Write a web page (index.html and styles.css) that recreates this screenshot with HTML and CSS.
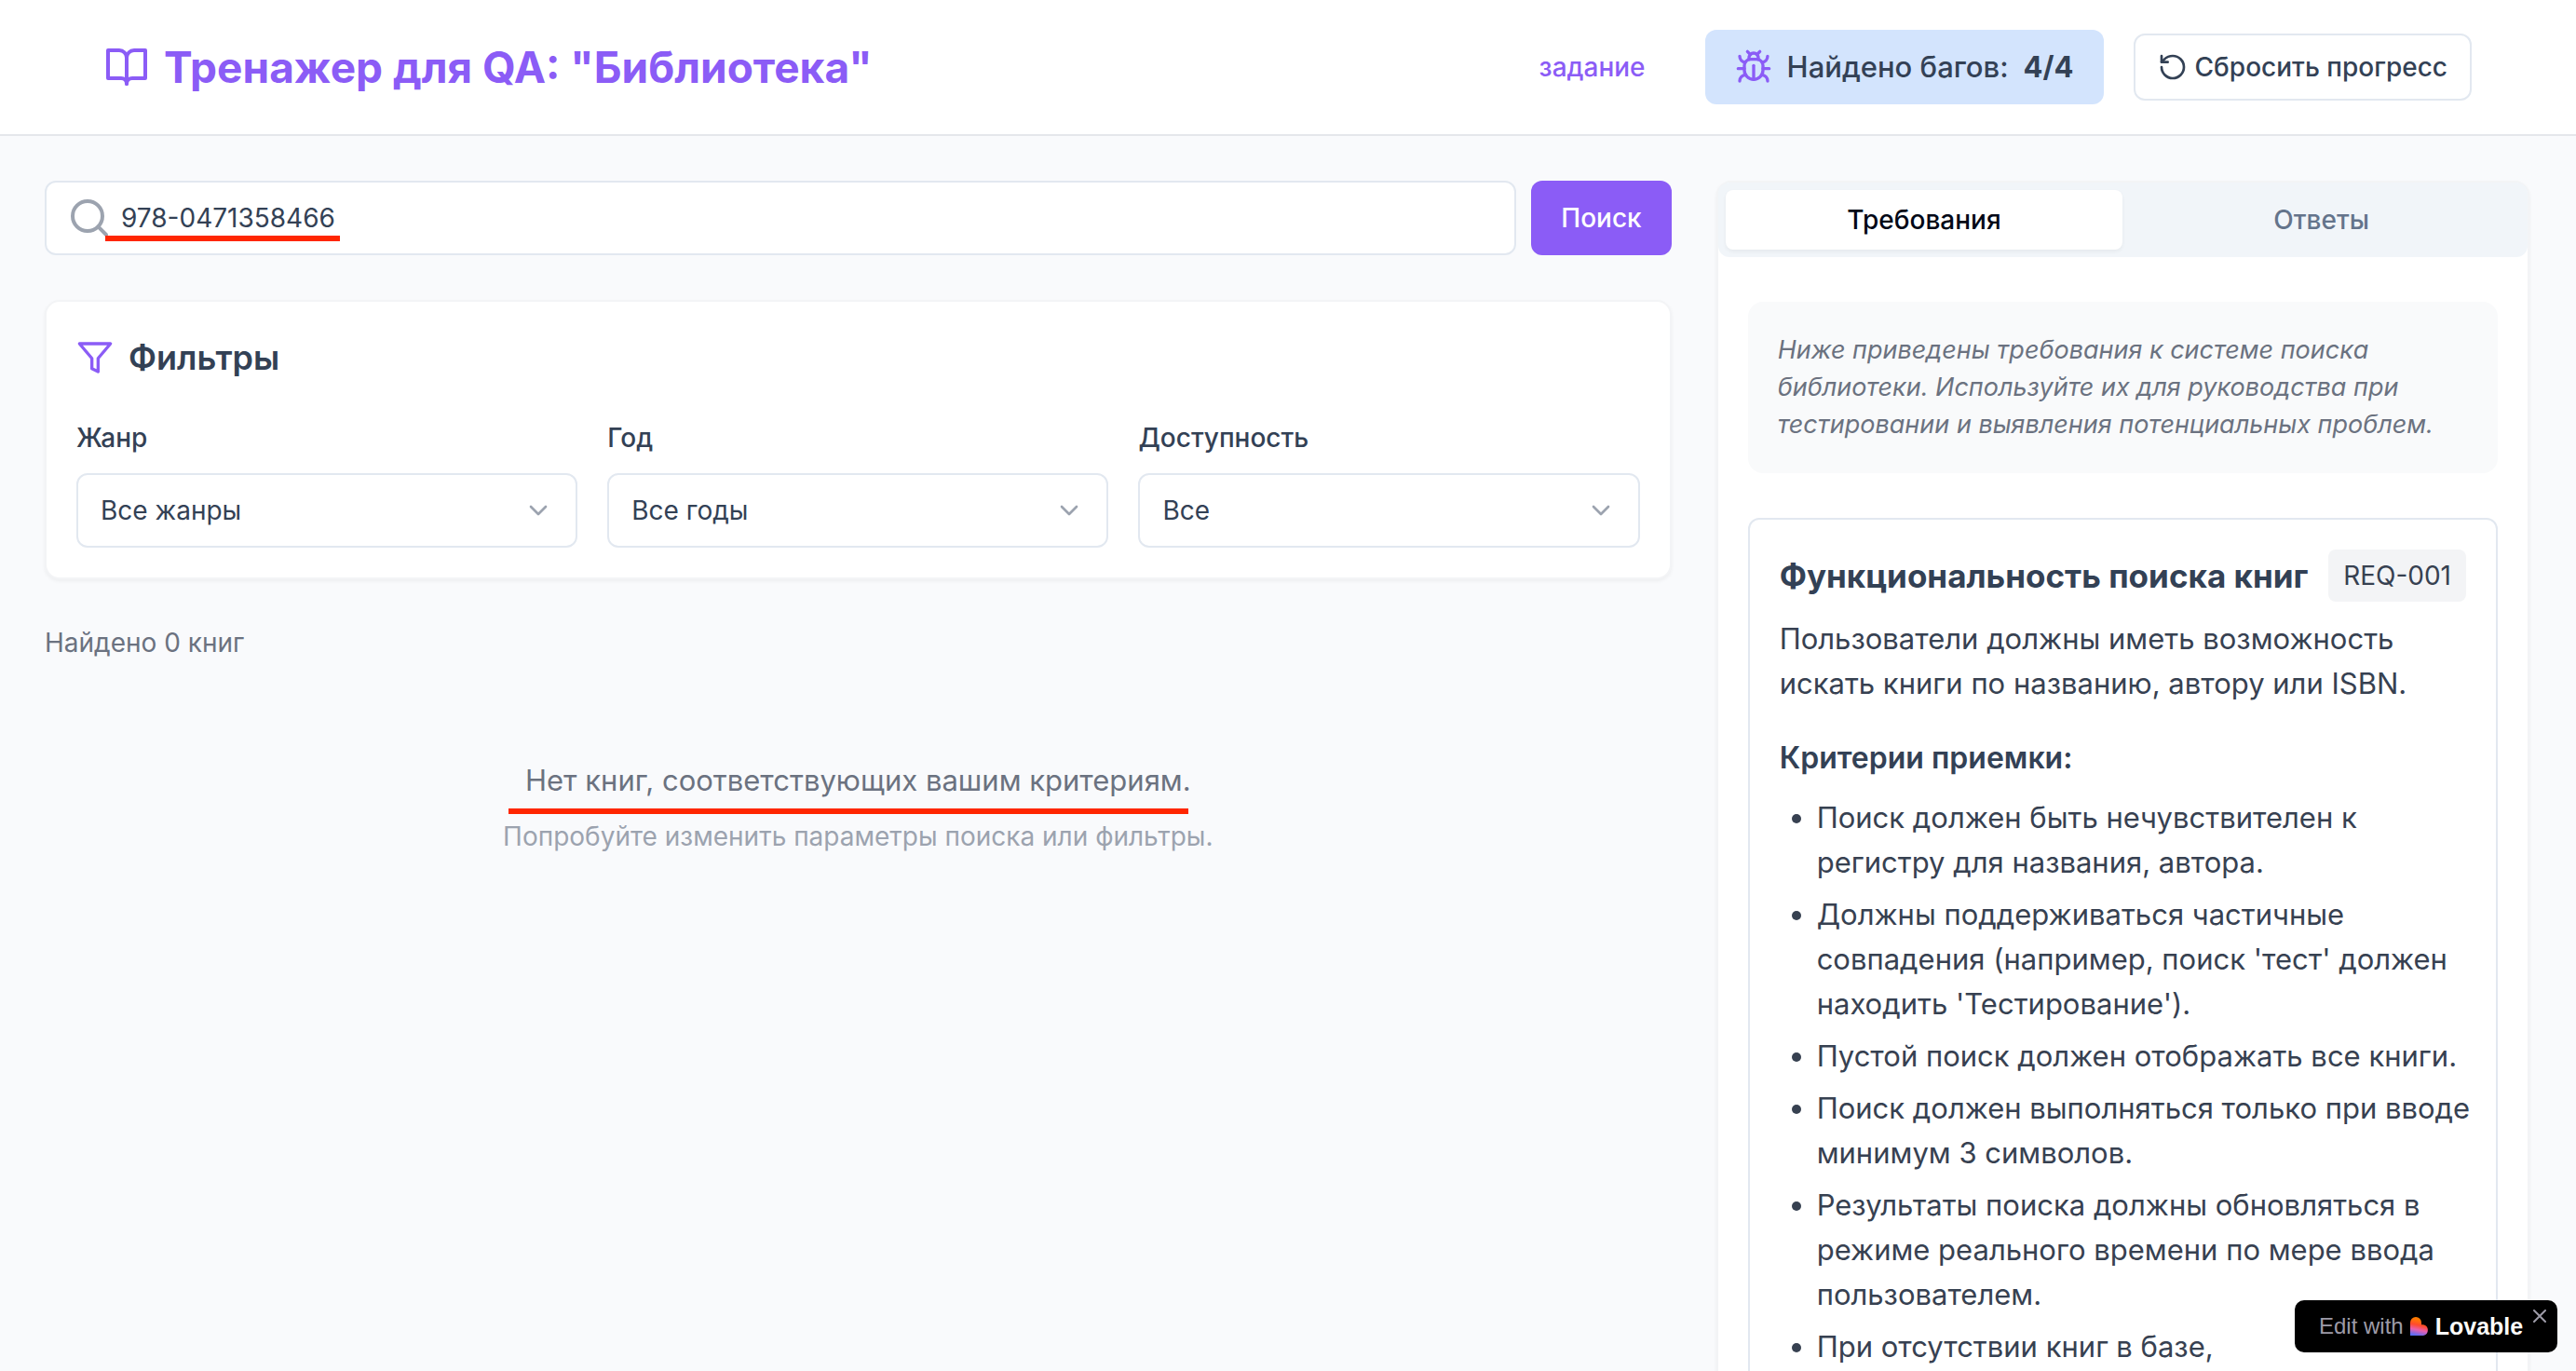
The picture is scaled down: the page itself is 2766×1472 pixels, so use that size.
FILE: index.html
```html
<!DOCTYPE html>
<html lang="ru">
<head>
<meta charset="utf-8">
<meta name="viewport" content="width=device-width, initial-scale=1">
<title>Тренажер для QA: "Библиотека"</title>
<link rel="stylesheet" href="styles.css">
</head>
<body>
<div class="app">
  <header class="header">
    <h1 class="brand">
      <svg class="icon icon-xl" viewBox="0 0 24 24" aria-hidden="true"><path d="M2 3h6a4 4 0 0 1 4 4v14a3 3 0 0 0-3-3H2z"/><path d="M22 3h-6a4 4 0 0 0-4 4v14a3 3 0 0 1 3-3h7z"/></svg>
      Тренажер для QA: "Библиотека"
    </h1>
    <div class="header-actions">
      <a class="task-link" href="#task">задание</a>
      <div class="bug-counter">
        <svg class="icon icon-lg accent" viewBox="0 0 24 24" aria-hidden="true"><path d="m8 2 1.880 1.880"/><path d="M14.120 3.880 16 2"/><path d="M9 7.130v-1a3.003 3.003 0 1 1 6 0v1"/><path d="M12 20c-3.300 0-6-2.700-6-6v-3a4 4 0 0 1 4-4h4a4 4 0 0 1 4 4v3c0 3.300-2.700 6-6 6"/><path d="M12 20v-9"/><path d="M6.530 9C4.600 8.800 3 7.100 3 5"/><path d="M6 13H2"/><path d="M3 21c0-2.100 1.700-3.900 3.800-4"/><path d="M20.970 5c0 2.100-1.600 3.800-3.500 4"/><path d="M22 13h-4"/><path d="M17.200 17c2.100.1 3.800 1.900 3.800 4"/></svg>
        <span>Найдено багов:</span>
        <strong>4/4</strong>
      </div>
      <button class="reset" type="button">
        <svg class="icon icon-sm" viewBox="0 0 24 24" aria-hidden="true"><path d="M3 12a9 9 0 1 0 9-9 9.750 9.750 0 0 0-6.740 2.740L3 8"/><path d="M3 3v5h5"/></svg>
        Сбросить прогресс
      </button>
    </div>
  </header>

  <main class="main">
    <section class="catalog">
      <form class="search">
        <div class="search-field">
          <svg class="icon search-icon" viewBox="0 0 24 24" aria-hidden="true"><circle cx="11" cy="11" r="8"/><path d="m21 21-4.300-4.300"/></svg>
          <input class="search-input" type="text" aria-label="Поиск книг" value="978-0471358466">
          <span class="mark mark-search"></span>
        </div>
        <button class="search-button" type="button">Поиск</button>
      </form>

      <div class="filters">
        <h2 class="filters-title">
          <svg class="icon icon-lg accent" viewBox="0 0 24 24" aria-hidden="true"><path d="M22 3H2l8 9.460V19l4 2v-8.540z"/></svg>
          Фильтры
        </h2>
        <div class="filters-grid">
          <div class="field">
            <label for="genre">Жанр</label>
            <div class="select-wrap">
              <select id="genre"><option>Все жанры</option></select>
              <svg class="icon chevron" viewBox="0 0 24 24" aria-hidden="true"><path d="m6 9 6 6 6-6"/></svg>
            </div>
          </div>
          <div class="field">
            <label for="year">Год</label>
            <div class="select-wrap">
              <select id="year"><option>Все годы</option></select>
              <svg class="icon chevron" viewBox="0 0 24 24" aria-hidden="true"><path d="m6 9 6 6 6-6"/></svg>
            </div>
          </div>
          <div class="field">
            <label for="availability">Доступность</label>
            <div class="select-wrap">
              <select id="availability"><option>Все</option></select>
              <svg class="icon chevron" viewBox="0 0 24 24" aria-hidden="true"><path d="m6 9 6 6 6-6"/></svg>
            </div>
          </div>
        </div>
      </div>

      <p class="count">Найдено 0 книг</p>

      <div class="empty">
        <div class="empty-text">
          <p class="empty-title">Нет книг, соответствующих вашим критериям.</p>
          <span class="mark mark-empty"></span>
          <p class="empty-hint">Попробуйте изменить параметры поиска или фильтры.</p>
        </div>
      </div>
    </section>

    <aside class="panel">
      <div class="tabs" role="tablist">
        <button class="tab tab-active" type="button" role="tab" aria-selected="true">Требования</button>
        <button class="tab" type="button" role="tab" aria-selected="false">Ответы</button>
      </div>
      <div class="panel-body">
        <p class="note">Ниже приведены требования к системе поиска библиотеки. Используйте их для руководства при тестировании и выявления потенциальных проблем.</p>
        <article class="requirement">
          <div class="requirement-head">
            <h3>Функциональность поиска книг</h3>
            <span class="req-id">REQ-001</span>
          </div>
          <p class="requirement-text">Пользователи должны иметь возможность искать книги по названию, автору или ISBN.</p>
          <h4>Критерии приемки:</h4>
          <ul class="criteria">
            <li>Поиск должен быть нечувствителен к регистру для названия, автора.</li>
            <li>Должны поддерживаться частичные совпадения (например, поиск 'тест' должен находить 'Тестирование').</li>
            <li>Пустой поиск должен отображать все книги.</li>
            <li>Поиск должен выполняться только при вводе минимум 3 символов.</li>
            <li>Результаты поиска должны обновляться в режиме реального времени по мере ввода пользователем.</li>
            <li>При отсутствии книг в базе,</li>
          </ul>
        </article>
      </div>
    </aside>
  </main>
</div>

<div class="lovable">
  <a class="lovable-link" href="#lovable">
    <span class="lovable-edit">Edit with</span>
    <svg class="lovable-logo" viewBox="0 0 20 20" aria-hidden="true">
      <defs>
        <linearGradient id="heart" x1="0.600" y1="0" x2="0.400" y2="1">
          <stop offset="0.150" stop-color="#ff7a00"/>
          <stop offset="0.450" stop-color="#ff4a2e"/>
          <stop offset="0.700" stop-color="#e85fae"/>
          <stop offset="1" stop-color="#5a6cf5"/>
        </linearGradient>
      </defs>
      <path fill="url(#heart)" d="M0 6a6 6 0 0 1 12 0v2.200h2a6 6 0 0 1 0 11.800H0z"/>
    </svg>
    <span class="lovable-name">Lovable</span>
  </a>
  <button class="lovable-close" type="button" aria-label="Close">
    <svg class="icon" viewBox="0 0 14 14" aria-hidden="true"><path d="M1 1l12 12M13 1L1 13"/></svg>
  </button>
</div>
</body>
</html>
```

FILE: styles.css
```css
*,
*::before,
*::after {
  box-sizing: border-box;
}

body,
h1,
h2,
h3,
h4,
p,
ul {
  margin: 0;
}

body {
  background: #f9fafc;
  color: #334155;
  font-family: Inter, "Noto Sans", sans-serif;
  font-size: 28px;
  line-height: 40px;
}

button,
input,
select {
  font: inherit;
  color: inherit;
}

.app {
  display: flex;
  flex-direction: column;
  height: 100vh;
  overflow: hidden;
}

.icon {
  flex: none;
  fill: none;
  stroke: currentColor;
  stroke-width: 2;
  stroke-linecap: round;
  stroke-linejoin: round;
}

.icon-xl { width: 48px; height: 48px; }
.icon-lg { width: 40px; height: 40px; }
.icon-sm { width: 32px; height: 32px; }
.accent { color: #8b5cf6; }

/* Header */
.header {
  display: flex;
  align-items: center;
  justify-content: space-between;
  padding: 32px 112px;
  background: #fff;
  border-bottom: 2px solid #e5e7eb;
}

.brand {
  display: flex;
  align-items: center;
  gap: 16px;
  color: #8b5cf6;
  font-size: 46px;
  font-weight: 700;
  line-height: 64px;
}

.header-actions {
  display: flex;
  align-items: center;
  gap: 32px;
}

.task-link {
  margin-right: 32px;
  color: #8b5cf6;
  font-weight: 500;
  text-decoration: none;
}

.bug-counter {
  display: flex;
  align-items: center;
  gap: 16px;
  height: 80px;
  padding: 0 32px;
  border-radius: 12px;
  background: #d3e4fd;
  font-size: 31px;
  font-weight: 500;
}

.bug-counter strong {
  font-weight: 700;
}

.reset {
  display: flex;
  align-items: center;
  gap: 8px;
  height: 72px;
  padding: 0 24px;
  border: 2px solid #e2e8f0;
  border-radius: 12px;
  background: #fff;
  font-weight: 500;
}

/* Main columns */
.main {
  display: grid;
  grid-template-columns: minmax(0, 2fr) minmax(0, 1fr);
  gap: 48px;
  padding: 48px 50px 48px 48px;
}

.catalog {
  display: flex;
  flex-direction: column;
  gap: 48px;
}

.search {
  display: flex;
  gap: 16px;
}

.search-field {
  position: relative;
  flex: 1;
}

.search-input {
  display: block;
  width: 100%;
  height: 80px;
  padding: 0 24px 0 80px;
  border: 2px solid #e2e8f0;
  border-radius: 12px;
  background: #fff;
}

.search-icon {
  position: absolute;
  top: 16px;
  left: 24px;
  width: 48px;
  height: 48px;
  color: #9ca3af;
}

.search-button {
  height: 80px;
  padding: 0 32px;
  border: 0;
  border-radius: 12px;
  background: #8b5cf6;
  color: #fff;
  font-weight: 500;
}

.mark {
  position: absolute;
  height: 6px;
  background: #ff2600;
}

.mark-search {
  top: 59px;
  left: 65px;
  width: 252px;
}

.mark-empty {
  top: 54px;
  left: 6px;
  width: 730px;
}

/* Filters */
.filters {
  padding: 32px;
  border: 2px solid #f3f4f6;
  border-radius: 16px;
  background: #fff;
  box-shadow: 0 2px 4px rgba(0, 0, 0, 0.05);
}

.filters-title {
  display: flex;
  align-items: center;
  gap: 16px;
  margin-bottom: 34px;
  font-size: 36px;
  font-weight: 600;
  line-height: 56px;
}

.filters-grid {
  display: grid;
  grid-template-columns: repeat(3, minmax(0, 1fr));
  gap: 32px;
}

.field label {
  display: block;
  margin-bottom: 14px;
  font-weight: 500;
  line-height: 48px;
}

.select-wrap {
  position: relative;
}

.select-wrap select {
  display: block;
  width: 100%;
  height: 80px;
  padding: 0 64px 0 24px;
  border: 2px solid #e2e8f0;
  border-radius: 12px;
  background: #fff;
  appearance: none;
}

.chevron {
  position: absolute;
  top: 24px;
  right: 26px;
  width: 32px;
  height: 32px;
  color: #9ca3af;
  pointer-events: none;
}

.count {
  color: #6b7280;
}

.empty {
  display: flex;
  justify-content: center;
  padding-top: 56px;
  text-align: center;
}

.empty-text {
  position: relative;
}

.empty-title {
  margin-bottom: 16px;
  color: #6b7280;
  font-size: 31px;
  line-height: 48px;
}

.empty-hint {
  color: #9ca3af;
}

/* Requirements panel */
.panel {
  border: 2px solid #f3f4f6;
  border-radius: 16px;
  background: #fff;
  box-shadow: 0 2px 4px rgba(0, 0, 0, 0.05);
}

.tabs {
  display: grid;
  grid-template-columns: 1fr 1fr;
  height: 80px;
  padding: 8px;
  border-radius: 12px;
  background: #f1f5f9;
}

.tab {
  border: 0;
  border-radius: 8px;
  background: none;
  color: #64748b;
  font-weight: 500;
}

.tab-active {
  background: #fff;
  color: #020817;
  box-shadow: 0 2px 4px rgba(0, 0, 0, 0.05);
}

.panel-body {
  display: flex;
  flex-direction: column;
  gap: 48px;
  padding: 48px 32px 32px;
}

.note {
  padding: 32px;
  border-radius: 16px;
  background: #f9fafb;
  color: #6b7280;
  font-size: 27px;
  font-style: italic;
}

.requirement {
  padding: 32px;
  border: 2px solid #e2e8f0;
  border-radius: 12px;
  color: #374151;
  font-size: 31px;
  line-height: 48px;
}

.requirement-head {
  display: flex;
  align-items: center;
  justify-content: space-between;
  margin-bottom: 16px;
}

.requirement h3 {
  color: #334155;
  font-size: 35px;
  font-weight: 700;
  line-height: 56px;
  white-space: nowrap;
}

.req-id {
  padding: 8px 16px;
  border-radius: 8px;
  background: #f3f4f6;
  font-size: 28px;
  line-height: 40px;
}

.requirement-text {
  margin-bottom: 32px;
}

.requirement h4 {
  margin-bottom: 16px;
  color: #334155;
  font-size: 32px;
  font-weight: 600;
}

.criteria {
  display: flex;
  flex-direction: column;
  gap: 8px;
  margin-right: -16px;
  padding-left: 40px;
}

/* Floating badge */
.lovable {
  position: fixed;
  right: 20px;
  bottom: 20px;
  display: flex;
  width: 282px;
  height: 56px;
  padding: 0 10px 0 26px;
  border-radius: 10px;
  background: #000;
  font-family: "Liberation Sans", sans-serif;
}

.lovable-link {
  display: flex;
  flex: 1;
  align-items: center;
  gap: 7px;
  text-decoration: none;
}

.lovable-edit {
  color: #9d9ba8;
  font-size: 24px;
  white-space: nowrap;
}

.lovable-logo {
  flex: none;
  width: 20px;
  height: 20px;
}

.lovable-name {
  color: #fcfbf8;
  font-size: 25px;
  font-weight: 700;
}

.lovable-close {
  display: flex;
  align-self: flex-start;
  margin-top: 8px;
  padding: 2px;
  border: 0;
  background: none;
  color: #9d9ba8;
}

.lovable-close .icon {
  width: 14px;
  height: 14px;
}
```
